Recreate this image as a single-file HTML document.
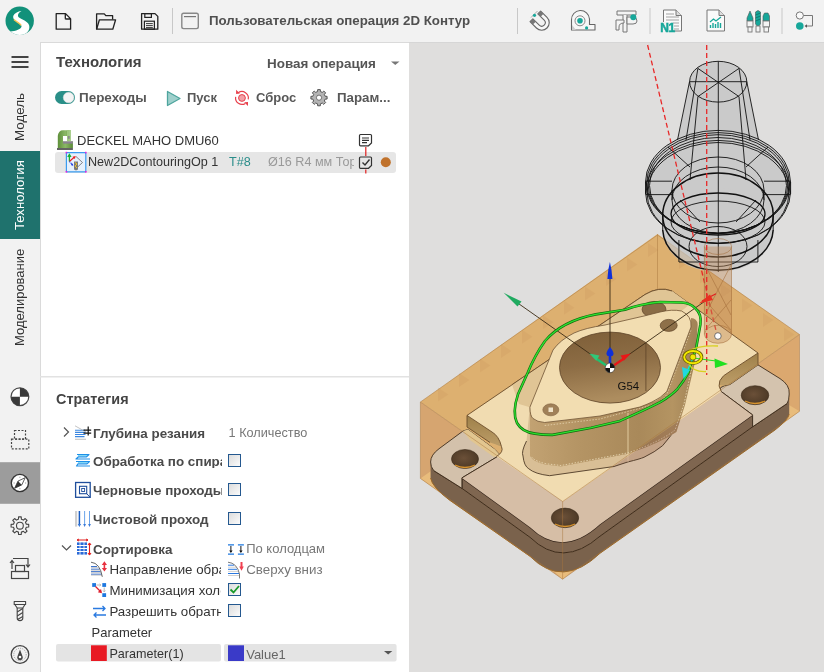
<!DOCTYPE html>
<html><head><meta charset="utf-8">
<style>
*{margin:0;padding:0;box-sizing:border-box}
html,body{width:824px;height:672px;overflow:hidden;background:#f2f2f2;font-family:"Liberation Sans",sans-serif}
.abs{position:absolute}
#top{left:0;top:0;width:824px;height:42px;background:#f2f2f2}
#side{left:0;top:42px;width:40px;height:630px;background:#f2f2f2}
#panel{left:40px;top:42px;width:369px;height:630px;background:#fff;box-shadow:inset 1px 1px 0 #dadada}
#vp{left:409px;top:42px;width:415px;height:630px;background:#dfdedd;overflow:hidden;box-shadow:inset 0 1px 0 #d6d6d6}
.vt{position:absolute;font-size:13px;white-space:nowrap;transform-origin:0 0;transform:rotate(-90deg);color:#333}
.b{font-weight:bold}
.t{position:absolute;white-space:nowrap;line-height:1}
.cb{position:absolute;width:13px;height:13px;border:1px solid #24588f;background:linear-gradient(135deg,#dcdcdc,#fbfbfb)}
</style></head><body>

<!-- TOP TOOLBAR -->
<div id="top" class="abs">
  <svg class="abs" style="left:0;top:0" width="824" height="42">
    <!-- logo -->
    <defs><clipPath id="clLogo"><circle cx="19.7" cy="20.8" r="14.2"/></clipPath></defs>
    <circle cx="19.7" cy="20.8" r="14.2" fill="#12917a"/>
    <path clip-path="url(#clLogo)" d="M21.5 10.9 C16 11.5 12 15 13.5 18.5 C15 22 20.5 22.5 21.5 26 C22 29 16 31 10 31.8 L12 40 L30 40 L25.5 33.9 C29 31 30 28 29 25 C27.5 21 22 19.5 19 17.5 C17 16 18 12.5 21.5 10.9 Z" fill="#fff"/>
    <path d="M13.9 19.6 C16 21.8 19.6 22.6 21.1 25.4" fill="none" stroke="#f4c552" stroke-width="1.4"/>
    <!-- new file -->
    <path d="M56.2 13.6 H65.4 L70.6 18.9 V29.2 H56.2 Z M65.4 13.6 L65.4 18.9 H70.6" fill="none" stroke="#222" stroke-width="1.3" stroke-linejoin="round"/>
    <path d="M65.4 13.6 L70.6 18.9 H66.6 Q65.4 18.9 65.4 17.7 Z" fill="#fff" stroke="#222" stroke-width="1.1" stroke-linejoin="round"/>
    <!-- open folder -->
    <path d="M96.6 29.2 V13.8 H104.3 L105.8 15.6 H112.6 V19.6" fill="none" stroke="#222" stroke-width="1.3" stroke-linejoin="round"/>
    <path d="M96.6 29.2 L99.4 19.8 H115.6 L112.8 29.2 Z" fill="none" stroke="#222" stroke-width="1.3" stroke-linejoin="round"/>
    <!-- save -->
    <path d="M141.6 13.6 H155 L157.8 16.4 V29.2 H141.6 Z" fill="none" stroke="#222" stroke-width="1.3" stroke-linejoin="round"/>
    <rect x="144.8" y="13.6" width="6.6" height="3.8" fill="none" stroke="#222" stroke-width="1.2"/>
    <rect x="144.4" y="21.2" width="10" height="8" fill="none" stroke="#222" stroke-width="1.2"/>
    <path d="M146 23.6 H152.8 M146 25.6 H152.8 M146 27.6 H152.8" stroke="#222" stroke-width="0.9"/>
    <!-- separator -->
    <path d="M172.5 8 V34" stroke="#c8c8c8" stroke-width="1"/>
    <!-- window icon -->
    <rect x="181.8" y="13.3" width="16.5" height="15.3" rx="1.8" fill="none" stroke="#888" stroke-width="1.4"/>
    <path d="M184 16.6 H196" stroke="#777" stroke-width="1.2"/>
    <!-- separators right -->
    <path d="M517.5 8 V34 M650 8 V34 M782 8 V34" stroke="#c8c8c8" stroke-width="1"/>
    <!-- magnet -->
    <g transform="translate(541,22) rotate(-45)">
      <path d="M-7.5 -8 V1 A7.5 7.5 0 0 0 7.5 1 V-8 H3.5 V1 A3.5 3.5 0 0 1 -3.5 1 V-8 Z" fill="#f7f7f7" stroke="#666" stroke-width="1.1" stroke-linejoin="round"/>
      <rect x="-7.5" y="-8" width="4" height="4" fill="#777"/>
      <rect x="3.5" y="-8" width="4" height="4" fill="#777"/>
    </g>
    <path d="M531 17.5 L537.5 11" stroke="#999" stroke-width="0.8"/>
    <circle cx="534.5" cy="15.3" r="1.6" fill="#17a79a"/>
    <!-- tape -->
    <path d="M571.5 30 V20 A9 9 0 0 1 589.5 19 V24.5 H595 V30 Z" fill="#f7f7f7" stroke="#666" stroke-width="1.1" stroke-linejoin="round"/>
    <circle cx="580" cy="20.8" r="5" fill="none" stroke="#888" stroke-width="1"/>
    <circle cx="580" cy="20.8" r="2.8" fill="#17a79a"/>
    <path d="M572 30 V25 L576 30 Z" fill="#ccc"/>
    <circle cx="586.6" cy="27.9" r="1.6" fill="#17a79a"/>
    <!-- caliper -->
    <g fill="#f4f4f4" stroke="#777" stroke-width="1" stroke-linejoin="round">
      <path d="M617 11 H636 V15 H617 Z"/>
      <path d="M623 15 V32 H627 V15"/>
      <path d="M616 20 H624 V23 Q619 23 619 27 V30 H616 Z"/>
      <path d="M627 17 H633 Q637 17 637 21 Q637 24 633 24 H627 Z"/>
    </g>
    <circle cx="633.3" cy="17.3" r="3" fill="#17a79a"/>
    <!-- N1 doc -->
    <path d="M663.5 10 H676 L681.5 15.5 V31 H663.5 Z" fill="#fafafa" stroke="#777" stroke-width="1"/>
    <path d="M676 10 V15.5 H681.5" fill="#ddd" stroke="#777" stroke-width="1"/>
    <path d="M666 14 H674 M666 17 H679 M666 20 H679 M666 23 H679 M674 26 H679 M674 29 H679" stroke="#999" stroke-width="0.9"/>
    <rect x="660" y="22" width="13" height="10" fill="#f2f2f2"/><text x="660.3" y="32" font-family="Liberation Sans" font-weight="bold" font-size="12" fill="#17a79a" stroke="#17a79a" stroke-width="0.5" letter-spacing="-0.5">N1</text>
    <!-- chart doc -->
    <path d="M707 10 H719 L724.5 15.5 V31 H707 Z" fill="#fafafa" stroke="#777" stroke-width="1"/>
    <path d="M719 10 V15.5 H724.5" fill="#ddd" stroke="#777" stroke-width="1"/>
    <path d="M710 22 L713.5 19 L716 21 L721 17" fill="none" stroke="#17a79a" stroke-width="1.2"/>
    <path d="M710.5 28 V25 M713 28 V23 M715.5 28 V24 M718 28 V22 M720.5 28 V23" stroke="#17a79a" stroke-width="1.4"/>
    <!-- tools -->
    <g>
      <path d="M747 18 L750 11 L753 18 V21 H747 Z" fill="#17a79a" stroke="#555" stroke-width="0.6"/>
      <rect x="747" y="21" width="6" height="6" fill="#f4f4f4" stroke="#777" stroke-width="0.9"/>
      <rect x="748" y="27" width="4" height="5" fill="#f4f4f4" stroke="#777" stroke-width="0.9"/>
      <path d="M755.5 12 Q758 9 760.5 12 V24 L758 27 L755.5 24 Z" fill="#17a79a" stroke="#555" stroke-width="0.6"/>
      <path d="M755.5 15 L760.5 13 M755.5 18 L760.5 16 M755.5 21 L760.5 19" stroke="#0c6e66" stroke-width="0.8"/>
      <rect x="756" y="26" width="4" height="6" fill="#f4f4f4" stroke="#777" stroke-width="0.9"/>
      <path d="M763 16 L764.5 13 H768 L769.5 16 V21 H763 Z" fill="#17a79a" stroke="#555" stroke-width="0.6"/>
      <rect x="763" y="21" width="6.5" height="6" fill="#f4f4f4" stroke="#777" stroke-width="0.9"/>
      <rect x="764" y="27" width="4.5" height="5" fill="#f4f4f4" stroke="#777" stroke-width="0.9"/>
    </g>
    <!-- flow -->
    <circle cx="799.8" cy="15.5" r="3.6" fill="#fafafa" stroke="#777" stroke-width="1"/>
    <circle cx="799.8" cy="26" r="3.8" fill="#17a79a"/>
    <path d="M803.5 15.5 H812.5 V26 H806" fill="none" stroke="#777" stroke-width="1"/>
    <path d="M804.5 26 L807 24.3 V27.7 Z" fill="#555"/>
  </svg>
  <div class="t b" style="left:209px;top:14px;font-size:13.3px;color:#505050">Пользовательская операция 2D Контур</div>
</div>

<!-- SIDEBAR -->
<div id="side" class="abs">
  <svg class="abs" style="left:0;top:0" width="40" height="630">
    <path d="M11.5 15 H28.5 M11.5 20 H28.5 M11.5 25 H28.5" stroke="#444" stroke-width="2"/>
    <rect x="0" y="109" width="40" height="88" fill="#1f726d"/>
    <rect x="0" y="420.2" width="40" height="41.6" fill="#9c9c9c"/>
    <!-- origin icon -->
    <g transform="translate(19.9,354.7)">
      <circle r="8.9" fill="#fff" stroke="#4a4a4a" stroke-width="1.2"/>
      <path d="M0 0 V-8.9 A8.9 8.9 0 0 1 8.9 0 Z M0 0 V8.9 A8.9 8.9 0 0 1 -8.9 0 Z" fill="#3a3a3a"/>
    </g>
    <!-- stock dashed -->
    <g fill="none" stroke="#444" stroke-width="1.2" stroke-dasharray="2 1.5">
      <rect x="14.5" y="388.5" width="11" height="8.7"/>
      <rect x="11.5" y="397.2" width="17.3" height="9.6"/>
    </g>
    <!-- compass -->
    <g transform="translate(19.9,441)">
      <circle r="8.6" fill="#fff" stroke="#333" stroke-width="1.4"/>
      <path d="M0 -6.3 V-5.2 M0 6.3 V5.2 M-6.3 0 H-5.2 M6.3 0 H5.2" stroke="#666" stroke-width="0.7"/>
      <path d="M5.3 -5.3 L1.9 1.9 L-5.3 5.3 L-1.9 -1.9 Z" fill="#fff" stroke="#333" stroke-width="0.8"/>
      <path d="M1.9 1.9 L-5.3 5.3 L-1.9 -1.9 Z" fill="#333"/>
    </g>
    <!-- gear -->
    <path d="M18.41 477.27 L18.58 474.90 L21.22 474.90 L21.39 477.27 L23.39 478.10 L25.19 476.54 L27.06 478.41 L25.50 480.21 L26.33 482.21 L28.70 482.38 L28.70 485.02 L26.33 485.19 L25.50 487.19 L27.06 488.99 L25.19 490.86 L23.39 489.30 L21.39 490.13 L21.22 492.50 L18.58 492.50 L18.41 490.13 L16.41 489.30 L14.61 490.86 L12.74 488.99 L14.30 487.19 L13.47 485.19 L11.10 485.02 L11.10 482.38 L13.47 482.21 L14.30 480.21 L12.74 478.41 L14.61 476.54 L16.41 478.10 Z" fill="none" stroke="#444" stroke-width="1.1" stroke-linejoin="round"/>
    <circle cx="19.9" cy="483.7" r="3.4" fill="none" stroke="#444" stroke-width="1.1"/>
    <!-- transfer -->
    <g fill="none" stroke="#444" stroke-width="1.2">
      <rect x="11.5" y="529.5" width="17" height="7"/>
      <rect x="15.5" y="523.5" width="9" height="6"/>
      <path d="M12 527 V518.5 M10 521 L12 518.5 L14 521"/>
      <path d="M13 516.5 H28 V525 M26 522.5 L28 525 L30 522.5"/>
    </g>
    <!-- drill -->
    <g fill="none" stroke="#444" stroke-width="1.1" stroke-linejoin="round">
      <path d="M14.2 559.5 H25.6 V562.5 H14.2 Z"/>
      <path d="M14.8 562.5 L17.2 566 H22.8 L25 562.5"/>
      <path d="M17.2 566 V576 Q17.2 578.6 20 578.6 Q22.8 578.6 22.8 576 V566"/>
      <path d="M17.2 570 L22.8 566.5 M17.2 574 L22.8 570.5 M17.5 577.5 L22.8 574.5"/>
    </g>
    <!-- dial -->
    <g transform="translate(20,612.5)">
      <circle r="8.8" fill="none" stroke="#444" stroke-width="1.3"/>
      <circle r="6.2" fill="none" stroke="#666" stroke-width="0.6" stroke-dasharray="1 1.2"/>
      <path d="M0 -5 L2.6 2 A2.8 2.8 0 1 1 -2.6 2 Z" fill="#444"/>
      <circle cy="2.5" r="1.3" fill="#fff"/>
    </g>
  </svg>
  <div class="vt" style="left:11.5px;top:98.5px;font-size:13.4px">Модель</div>
  <div class="vt" style="left:11.8px;top:188px;color:#fff;font-size:13.2px">Технология</div>
  <div class="vt" style="left:11.5px;top:304px">Моделирование</div>
</div>

<!-- PANEL -->
<div id="panel" class="abs">
  <div class="t b" style="left:16px;top:12px;font-size:15px;color:#444">Технология</div>
  <div class="t b" style="left:227px;top:14.5px;font-size:13.45px;color:#555">Новая операция</div>
  <svg class="abs" style="left:0;top:0" width="369" height="630">
    <path d="M351 19.5 H359.5 L355.25 23 Z" fill="#777"/>
    <!-- toggle -->
    <rect x="15" y="49" width="20" height="13" rx="6.5" fill="#2a8f88"/>
    <circle cx="28.6" cy="55.5" r="5.3" fill="#f4f4f4" stroke="#e0e0e0" stroke-width="0.5"/>
    <!-- play -->
    <path d="M127.5 49.5 L140 56.5 L127.5 63.5 Z" fill="#9fd0cc" stroke="#4ea59e" stroke-width="1.3" stroke-linejoin="round"/>
    <!-- reset -->
    <g fill="none" stroke="#e8404c" stroke-width="1.2">
      <path d="M198.29 50.72 A6.4 6.4 0 0 1 208.22 57.29"/>
      <path d="M195.66 54.85 A6.4 6.4 0 0 0 205.35 61.39"/>
    </g>
    <path d="M196.1 47.7 L196.1 51.9 L199.9 51.6 Z M208 60 L208 64 L204.2 60.3 Z" fill="#e8404c"/>
    <circle cx="201.96" cy="55.96" r="3.4" fill="#f2a0a6" stroke="#e8404c" stroke-width="1"/>
    <!-- gear -->
    <path d="M285.14 54.28 L287.09 54.35 L287.09 57.05 L285.14 57.12 L284.35 59.03 L285.67 60.47 L283.77 62.37 L282.33 61.05 L280.42 61.84 L280.35 63.79 L277.65 63.79 L277.58 61.84 L275.67 61.05 L274.23 62.37 L272.33 60.47 L273.65 59.03 L272.86 57.12 L270.91 57.05 L270.91 54.35 L272.86 54.28 L273.65 52.37 L272.33 50.93 L274.23 49.03 L275.67 50.35 L277.58 49.56 L277.65 47.61 L280.35 47.61 L280.42 49.56 L282.33 50.35 L283.77 49.03 L285.67 50.93 L284.35 52.37 Z" fill="#b4b4b4" stroke="#555" stroke-width="1" stroke-linejoin="round"/>
    <circle cx="279" cy="55.7" r="2.6" fill="#fff" stroke="#555" stroke-width="0.8"/>
    <!-- machine icon -->
    <defs><linearGradient id="gMach" x1="0" y1="0" x2="1" y2="0"><stop offset="0" stop-color="#5e8f3a"/><stop offset="0.5" stop-color="#8bb866"/><stop offset="1" stop-color="#5a8a36"/></linearGradient></defs>
    <path d="M17.8 106 V93.8 Q18.5 88.2 23 88.2 H27.1 V94 H23 V99.4 H32.9 V106 Z" fill="url(#gMach)"/>
    <rect x="27" y="88" width="3.8" height="11" fill="#8dbd6a"/>
    <path d="M28 88 V99 M29.8 88 V99" stroke="#c8e0b0" stroke-width="0.6"/>
    <rect x="27.9" y="94" width="1.8" height="2.8" fill="#888"/>
    <rect x="23" y="99.4" width="9.9" height="2.2" fill="#8a8290"/>
    <rect x="17" y="106.2" width="15.9" height="1.6" fill="#3e3e3e"/>
    <!-- selected row -->
    <rect x="15" y="110" width="341" height="21" rx="3" fill="#e6e6e6"/>
    <!-- op icon -->
    <rect x="26.4" y="110.6" width="19.4" height="19.2" rx="0.8" fill="#e6f0fc" stroke="#3a9cf0" stroke-width="1.2"/>
    <g fill="#e020e0"><rect x="25.6" y="109.8" width="1.6" height="1.6"/><rect x="45" y="109.8" width="1.6" height="1.6"/><rect x="25.6" y="129" width="1.6" height="1.6"/><rect x="45" y="129" width="1.6" height="1.6"/></g>
    <path d="M36 114.5 L42.5 120.5 L36 126.5" fill="none" stroke="#777" stroke-width="0.9"/>
    <path d="M29.4 119.5 V112.5 M27.8 115 L29.4 112.5 L31 115" fill="none" stroke="#18b030" stroke-width="1.3"/>
    <path d="M29.4 119.5 L34.5 115" stroke="#e82020" stroke-width="1.1"/>
    <path d="M35.8 114 L32.5 114.8 L34.8 117 Z" fill="#e82020"/>
    <path d="M29.4 119.5 L33.5 124" stroke="#2040e0" stroke-width="1.1" stroke-dasharray="1.2 0.8"/>
    <circle cx="32" cy="122.5" r="0.9" fill="#2040e0"/>
    <path d="M34 119.5 H38 V127.5 L36 128.5 L34 127.5 Z" fill="#7a7a7a"/>
    <path d="M35 120.5 L37 122 L35 124 L37 126" fill="none" stroke="#f0c020" stroke-width="1"/>
    <!-- note icon -->
    <g fill="none" stroke="#333" stroke-width="1.2">
      <path d="M320.5 92.5 H330.5 Q331.5 92.5 331.5 93.5 V101 L328.5 103.8 H320.5 Q319.5 103.8 319.5 102.8 V93.5 Q319.5 92.5 320.5 92.5Z"/>
      <path d="M322 96 H329 M322 98.3 H329 M322 100.6 H327"/>
      <path d="M320.5 115 H330.5 Q331.5 115 331.5 116 V123.5 L328.5 126.3 H320.5 Q319.5 126.3 319.5 125.3 V116 Q319.5 115 320.5 115Z"/>
      <path d="M322.5 120.5 L325 123 L329.5 117.5" stroke-width="1.4"/>
    </g>
    <path d="M325.8 105 V114 M325.8 127.5 V131.5" stroke="#e02020" stroke-width="1.2"/>
    <circle cx="345.8" cy="120.3" r="5" fill="#c0722c"/>
    <!-- divider -->
    <rect x="0" y="334" width="369" height="1.5" fill="#e2e2e2"/>
  </svg>
  <div class="t b" style="left:39px;top:48.5px;font-size:13.45px;color:#585858">Переходы</div>
  <div class="t b" style="left:147px;top:48.5px;font-size:13px;color:#585858">Пуск</div>
  <div class="t b" style="left:216px;top:48.5px;font-size:13px;color:#585858">Сброс</div>
  <div class="t b" style="left:297px;top:48.5px;font-size:13.3px;color:#585858">Парам...</div>
  <div class="t" style="left:37px;top:92px;font-size:13px;color:#333">DECKEL MAHO DMU60</div>
  <div class="t" style="left:48px;top:114px;font-size:12.6px;color:#333">New2DContouringOp 1</div>
  <div class="t" style="left:189px;top:114px;font-size:12.6px;color:#2b8d8a">T#8</div>
  <div class="t" style="left:228px;top:114px;font-size:12.6px;color:#999;width:86px;overflow:hidden">Ø16 R4 мм Тор</div>
  <div class="t b" style="left:16px;top:349.5px;font-size:14.4px;color:#444">Стратегия</div>
  <svg class="abs" style="left:0;top:0" width="369" height="630">
    <!-- chevrons -->
    <path d="M24 385.5 L28.5 390 L24 394.5" fill="none" stroke="#555" stroke-width="1.2"/>
    <path d="M22 503.5 L26.5 508 L31 503.5" fill="none" stroke="#555" stroke-width="1.2"/>
    <!-- depth icon -->
    <g>
      <path d="M35 388.3 H45 M35 390.4 H45.5 M35 392.5 H45.5 M35 394.6 H44.5" stroke="#3a86e0" stroke-width="1.1"/>
      <path d="M35 383.8 L46 390" stroke="#aaa" stroke-width="0.7"/>
      <path d="M35 397.3 H46" stroke="#c8c8c8" stroke-width="1.2"/>
      <path d="M48.2 384.5 V393.6 M43.5 388.2 H51.2 M43.5 391.1 H51.2" stroke="#111" stroke-width="1.2"/>
    </g>
    <!-- spiral icon -->
    <g fill="none" stroke-width="1.2" stroke-linejoin="round">
      <path d="M37 412.5 H49 L46.5 414.8 H38.5 L36 417 H50 M36 419.5 H49.5 L47 421.8 H38 L36.5 424 H50" stroke="#1e90e8"/>
      <path d="M38 413.6 H47 M38 420.6 H47" stroke="#50c8f0" stroke-width="0.8"/>
    </g>
    <!-- rough passes icon -->
    <g fill="none" stroke="#1f4e9c">
      <rect x="35.6" y="440.5" width="14.6" height="14.8" stroke-width="1.3"/>
      <rect x="39.5" y="444.3" width="7.2" height="7.4" stroke-width="1.1"/>
      <rect x="41.7" y="446.5" width="2.9" height="3" stroke-width="0.9"/>
      <path d="M46.7 451.7 L50.2 455.3" stroke-width="1"/>
    </g>
    <!-- finish icon -->
    <g>
      <rect x="35" y="469" width="2.2" height="15.6" fill="#d0d0d0"/>
      <path d="M39.4 469 V483" stroke="#1a5cc0" stroke-width="1.5"/>
      <path d="M44.6 469 V483 M49.5 469 V483" stroke="#5a9ae8" stroke-width="0.9"/>
      <path d="M37.7 482 L39.4 485 L41.1 482 Z M43.2 482 L44.6 485 L46 482 Z M48.1 482 L49.5 485 L50.9 482 Z" fill="#3a7ad8"/>
    </g>
    <!-- sort icon -->
    <g transform="translate(36,497)">
      <path d="M1 5 H11 M1 8 H11 M1 11 H11 M1 14 H11" stroke="#2a6ad8" stroke-width="1.8"/>
      <path d="M1 3.5 H11 M1 15.5 H11" stroke="#2a6ad8" stroke-width="0.6"/>
      <path d="M4 3 V16 M8 3 V16" stroke="#fff" stroke-width="0.8"/>
      <path d="M1 1 H12 M1 1 L3 0 M1 1 L3 2 M12 1 L10 0 M12 1 L10 2" stroke="#e02020" stroke-width="1"/>
      <path d="M13.5 4 V16 M13.5 4 L12 6 M13.5 4 L15 6 M13.5 16 L12 14 M13.5 16 L15 14" stroke="#e02020" stroke-width="1.1"/>
    </g>
    <!-- direction icon -->
    <g>
      <path d="M51 524.6 H57 M51 527.2 H59.5 M51 529.7 H60.5 M51 532.2 H61.5" stroke="#2a66c8" stroke-width="1"/>
      <path d="M51 525.6 H58 M51 528.2 H60 M51 530.7 H61 M51 533.2 H62" stroke="#c8c8c8" stroke-width="0.9"/>
      <path d="M51 520.2 Q60 521 62.3 534.8" fill="none" stroke="#555" stroke-width="0.9"/>
      <path d="M64.4 522 V527" stroke="#e83040" stroke-width="1.6"/>
      <path d="M64.4 519.3 L61.8 523 H67 Z M64.4 529.6 L61.8 526 H67 Z" fill="#e83040"/>
    </g>
    <!-- minimize icon -->
    <g>
      <rect x="52.2" y="541.1" width="3.8" height="3.8" fill="#1e78e0"/>
      <rect x="62.3" y="541.1" width="3.8" height="3.8" fill="#1e78e0"/>
      <rect x="62.3" y="551.2" width="3.8" height="3.8" fill="#1e78e0"/>
      <path d="M56.5 543 H60.5 M64.2 545.5 V549.5" stroke="#aaa" stroke-width="0.8"/>
      <path d="M59.5 541.8 L61 543 L59.5 544.2 M63 548.5 L64.2 550 L65.4 548.5" fill="none" stroke="#aaa" stroke-width="0.7"/>
      <path d="M55.5 544.5 L61 550" stroke="#e02030" stroke-width="1.2"/>
      <path d="M62 551.2 L57.8 550.2 L61 547 Z" fill="#e02030"/>
    </g>
    <!-- reverse icon -->
    <g transform="translate(52,563)" stroke="#2a7ae0" stroke-width="1.3" fill="none">
      <path d="M1 3.5 H13 M10.5 1 L13 3.5 L10.5 6"/>
      <path d="M14 10 H2 M4.5 7.5 L2 10 L4.5 12.5"/>
    </g>
    <!-- right column icons: По колодцам -->
    <g>
      <path d="M188 502.8 H194 M188 512.2 H194 M197.9 502.8 H203.9 M197.9 512.2 H203.9" stroke="#1e78e0" stroke-width="1.3"/>
      <path d="M190.9 504 V509.5 M200.9 504 V509.5" stroke="#111" stroke-width="1"/>
      <path d="M189.2 508.5 L190.9 511 L192.6 508.5 Z M199.2 508.5 L200.9 511 L202.6 508.5 Z" fill="#111"/>
    </g>
    <!-- Сверху вниз icon -->
    <g>
      <path d="M188 523.2 H194 M188 527.3 H197 M188 531.5 H199" stroke="#2a78e0" stroke-width="1"/>
      <path d="M188 525.2 H196 M188 529.4 H198 M188 533.5 H199" stroke="#ccc" stroke-width="0.9"/>
      <path d="M188 520.2 Q197 521 199.5 532 V536.5" fill="none" stroke="#555" stroke-width="0.8"/>
      <path d="M201.5 520 V525" stroke="#f04050" stroke-width="2"/>
      <path d="M199.2 524.5 L201.5 528.7 L203.8 524.5 Z" fill="#f04050"/>
    </g>
    <!-- param row highlight -->
    <rect x="16" y="602" width="165" height="17.5" rx="2" fill="#e4e4e4"/>
    <rect x="184" y="602" width="172.6" height="17.5" rx="2" fill="#e4e4e4"/>
    <rect x="51" y="603.3" width="15.8" height="15.7" fill="#e81a24"/>
    <rect x="188" y="603.3" width="16" height="15.7" fill="#3a3ac8"/>
    <path d="M344 609 H352.3 L348.15 612.6 Z" fill="#555"/>
    <!-- checkmark -->
  </svg>
  <div class="t b" style="left:53px;top:385px;font-size:13.4px;color:#4a4a4a">Глубина резания</div>
  <div class="t" style="left:188.6px;top:385px;font-size:12.7px;color:#777">1 Количество</div>
  <div class="t b" style="left:53px;top:413px;font-size:13.4px;color:#4a4a4a;width:129px;overflow:hidden">Обработка по спиралі</div>
  <div class="t b" style="left:53px;top:442px;font-size:13.4px;color:#4a4a4a;width:129px;overflow:hidden">Черновые проходы</div>
  <div class="t b" style="left:53px;top:471px;font-size:13.4px;color:#4a4a4a">Чистовой проход</div>
  <div class="cb" style="left:188px;top:412px"></div>
  <div class="cb" style="left:188px;top:441px"></div>
  <div class="cb" style="left:188px;top:470px"></div>
  <div class="t b" style="left:53px;top:501px;font-size:13.4px;color:#4a4a4a">Сортировка</div>
  <div class="t" style="left:69.4px;top:521px;font-size:13.3px;color:#333;width:112px;overflow:hidden">Направление обработки</div>
  <div class="t" style="left:69.4px;top:542px;font-size:13.3px;color:#333;width:112px;overflow:hidden">Минимизация холостых</div>
  <div class="t" style="left:69.4px;top:563px;font-size:13.3px;color:#333;width:112px;overflow:hidden">Разрешить обратное</div>
  <div class="t" style="left:51.5px;top:584px;font-size:13px;color:#333">Parameter</div>
  <div class="t" style="left:69.4px;top:606px;font-size:12.6px;color:#333">Parameter(1)</div>
  <div class="t" style="left:206.2px;top:500px;font-size:13px;color:#777">По колодцам</div>
  <div class="t" style="left:206.2px;top:521px;font-size:13.35px;color:#777">Сверху вниз</div>
  <div class="cb" style="left:188px;top:541px"><svg width="11" height="11" style="position:absolute;left:0;top:0"><path d="M1.5 5.5 L4.5 8.5 L10 2" fill="none" stroke="#1a9a2a" stroke-width="1.8"/></svg></div>
  <div class="cb" style="left:188px;top:562px"></div>
  <div class="t" style="left:206.2px;top:606px;font-size:13px;color:#666">Value1</div>
</div>

<!-- VIEWPORT -->
<div id="vp" class="abs">
<svg class="abs" style="left:0;top:0" width="415" height="630" viewBox="409 42 415 630">
  <defs>
    <linearGradient id="gWall" x1="0" y1="0" x2="1" y2="0">
      <stop offset="0" stop-color="#c2a272"/><stop offset="0.3" stop-color="#b49464"/><stop offset="0.65" stop-color="#a9895a"/><stop offset="0.85" stop-color="#b49462"/><stop offset="1" stop-color="#a08256"/>
    </linearGradient>
    <linearGradient id="gBore" x1="0" y1="0" x2="0.2" y2="1">
      <stop offset="0" stop-color="#7d5e38"/><stop offset="0.5" stop-color="#8d6d45"/><stop offset="1" stop-color="#ad8d5f"/>
    </linearGradient>
    <radialGradient id="gHole" cx="0.45" cy="0.45" r="0.6">
      <stop offset="0" stop-color="#6b5038"/><stop offset="1" stop-color="#4b3825"/>
    </radialGradient>
    <linearGradient id="gPlatSide" x1="0" y1="0" x2="0" y2="1">
      <stop offset="0" stop-color="#9e8049"/><stop offset="1" stop-color="#bd9d68"/>
    </linearGradient>
    <clipPath id="clBoss"><path d="M526.5 441 Q521 452 523 456 Q524 466 528.8 468.8 Q535 474 549.6 475.7 L614 466.5 L628 461.9 Q640 459 644 457.25 Q655 452 662.6 445.7 Q672 436 676.4 425 L681 408.8 L690 340 L530 405 Z"/><path d="M529.9 407.2 L530 456 Q533 462 545 464.5 L561 466.5 L628 453.8 Q660 443 676.4 431.9 L685 405 L695 362 L697.7 324.5 Q697 318 691 318 L691 327 L666.9 391.4 Q660 400 652 402 L600 416 L544.7 422.5 Q535 421 533 418.5 Z"/></clipPath>
  </defs>

  
  <!-- STOCK base faces -->
  <polygon points="420.4,402 657.5,234 799.5,334.5 562.6,501.5" fill="#ddb070"/>
  <polygon points="420.4,402 562.6,501.5 562.6,579.2 420.4,478.4" fill="#d6a570"/>
  <polygon points="562.6,501.5 799.5,334.5 799.5,411.3 562.6,579.2" fill="#dba86f"/>
  <!-- stock bottom seen (light) -->
  <path d="M420.4 478.4 L431 471 L449 500 L562.6 579.2 Z" fill="#e8bc7c"/>
  <path d="M562.6 579.2 L548 566 L578 566 Z" fill="#e8bc7c"/>
  <path d="M799.5 411.3 L789 405 L781 425 Z" fill="#e8bc7c"/>

  <!-- faint triangles on stock top band -->
  <g fill="#c8945a" opacity="0.22"><path d="M438.0 387.5 L448.5 394.5 L438.0 401.5 Z"/><path d="M459.0 373.1 L469.5 380.1 L459.0 387.1 Z"/><path d="M480.0 358.6 L490.5 365.6 L480.0 372.6 Z"/><path d="M501.0 344.1 L511.5 351.1 L501.0 358.1 Z"/><path d="M522.0 329.7 L532.5 336.7 L522.0 343.7 Z"/><path d="M543.0 315.2 L553.5 322.2 L543.0 329.2 Z"/><path d="M564.0 300.8 L574.5 307.8 L564.0 314.8 Z"/><path d="M585.0 286.4 L595.5 293.4 L585.0 300.4 Z"/><path d="M606.0 271.9 L616.5 278.9 L606.0 285.9 Z"/><path d="M627.0 257.5 L637.5 264.5 L627.0 271.5 Z"/><path d="M648.0 243.0 L658.5 250.0 L648.0 257.0 Z"/><path d="M679.0 255.0 L689.5 262.0 L679.0 269.0 Z"/><path d="M700.0 269.5 L710.5 276.5 L700.0 283.5 Z"/><path d="M721.0 284.0 L731.5 291.0 L721.0 298.0 Z"/><path d="M742.0 298.5 L752.5 305.5 L742.0 312.5 Z"/><path d="M763.0 313.0 L773.5 320.0 L763.0 327.0 Z"/><path d="M784.0 327.5 L794.5 334.5 L784.0 341.5 Z"/></g>

  <!-- BASE PLATE side -->
  <path d="M430.6 462 L433.75 470.6 L461.9 488.3 L530 537.3 Q562.5 569 600 536.2 L752.6 426.8 L787 403.6 Q790 400 789.2 394 L789.2 414.3 Q788 420 775 430 L600 553.3 Q562.5 589 530 556.3 L449.4 500 Q432 487 430.6 478 Z" fill="#7a624c"/>
  <path d="M600 553.3 Q562.5 589 530 556.3 L449.4 500 Q432 487 430.6 478 M789.2 414.3 Q788 420 775 430 L600 553.3" fill="none" stroke="#9c6a2a" stroke-width="1"/>
  <!-- STRIP side -->
  <path d="M461.9 477.9 L530 527.3 Q562.5 558.5 600 524.3 L752.6 414.9 L752.6 426.8 L600 536.2 Q562.5 569 530 537.3 L461.9 488.3 Z" fill="#7f6650"/>
  <path d="M433.75 470.6 L461.9 488.3 L530 537.3 Q562.5 569 600 536.2 L752.6 426.8 L787 403.6" fill="none" stroke="#3d2c1c" stroke-width="1"/>
  <path d="M461.9 477.9 L530 527.3 Q562.5 558.5 600 524.3 L752.6 414.9 V426.8 M461.9 477.9 V488.3" fill="none" stroke="#33241a" stroke-width="1.2"/>

  <!-- left tab top -->
  <path d="M463 431 L439 448.75 Q430.6 455 430.6 462 Q430.6 467 433.75 470.6 L461.9 488.3 L461.9 477.9 L500 455 L494.7 449.3 L468 429.6 Z" fill="#d3c1ab" stroke="#3d2c1c" stroke-width="0.9"/>
  <path d="M463 431 L468 429.6 L494.7 449.3 L500 455 L494 457 L470 440 Z" fill="#e2c690"/>
  <!-- right tab top -->
  <path d="M758 364.9 L780 378.6 Q790 385 789.2 394 Q789 401 787 403.6 L752.6 426.8 L752.6 414.9 L721.3 391.6 Q716 387 730 384.5 Z" fill="#d4c3ae" stroke="#3d2c1c" stroke-width="0.9"/>
  <!-- STRIP top -->
  <path d="M461.9 477.9 L500 455 L563 501.5 L721.3 391.6 L752.6 414.9 L600 524.3 Q562.5 558.5 530 527.3 Z" fill="#d6bea6"/>
  <path d="M461.9 477.9 L500 455 M721.3 391.6 L752.6 414.9" fill="none" stroke="#3d2c1c" stroke-width="0.9"/>

  <!-- PLATFORM side faces -->
  <path d="M467 415.4 L467 427 L490 442.5 Q503 447 501.5 446.7 Q503 440 492 432 Z" fill="url(#gPlatSide)"/>
  <path d="M758 353 L758 364.9 L730 384.5 Q716 388 718 380 L730 371.4 Z" fill="url(#gPlatSide)"/>
  <!-- PLATFORM top -->
  <path d="M467 415.4 L645 294.5 Q659 286 672 291 L758 353 L730 371.4 Q714 380 721.3 391.6 L563 501.5 L496.5 456.4 Q504 452 501.5 446.7 Q499 436 492 432 Z" fill="#f1dcb1"/>
  <path d="M467 415.4 L645 294.5 Q659 286 672 291 L758 353 V364.9 M758 353 L730 371.4 Q714 380 721.3 391.6 M496.5 456.4 Q504 452 501.5 446.7 Q499 436 492 432 L467 415.4 V427 L490 442.5" fill="none" stroke="#6a4c2a" stroke-width="0.9"/>

  <!-- plate holes -->
  <ellipse cx="465" cy="459" rx="13.5" ry="9.5" fill="url(#gHole)" stroke="#3a2a1a" stroke-width="0.6"/>
  <path d="M455 465 Q465 470 475 465" fill="none" stroke="#d8942e" stroke-width="1.3"/>
  <ellipse cx="565" cy="517.9" rx="13.7" ry="9.8" fill="url(#gHole)" stroke="#3a2a1a" stroke-width="0.6"/>
  <path d="M555 524 Q565 529 575 524" fill="none" stroke="#d8942e" stroke-width="1.3"/>
  <ellipse cx="755" cy="395.2" rx="13.8" ry="9.5" fill="url(#gHole)" stroke="#3a2a1a" stroke-width="0.6"/>
  <path d="M745 401 Q755 406 765 401" fill="none" stroke="#d8942e" stroke-width="1.3"/>
  <ellipse cx="654" cy="309.4" rx="12" ry="8" fill="#8a6c46" stroke="#5a4028" stroke-width="0.6"/>

  <!-- BOSS fillet -->
  <path d="M526.5 441 Q521 452 523 456 Q524 466 528.8 468.8 Q535 474 549.6 475.7 L614 466.5 L628 461.9 Q640 459 644 457.25 Q655 452 662.6 445.7 Q672 436 676.4 425 L681 408.8 L690 340 L530 405 Z" fill="#d9bf96"/>
  <path d="M526.5 441 Q521 452 523 456 Q524 466 528.8 468.8 Q535 474 549.6 475.7 L614 466.5 L628 461.9 Q640 459 644 457.25 Q655 452 662.6 445.7 Q672 436 676.4 425 L681 408.8" fill="none" stroke="#4e3a26" stroke-width="0.9"/>
  <!-- upper-left slope band -->
  <path d="M529.9 407.2 L519 404 L512 384.7 L645 294.5 Q659 286 672 291 L690 304 L681.6 311 L644 316 L605 325 Q585 328 574 333 Q560 340 553 350 Z" fill="#e0c595"/>
  <path d="M512 384.7 L645 294.5 Q659 286 672 291" fill="none" stroke="#6a4c2a" stroke-width="0.9"/>
  <ellipse cx="654" cy="309.4" rx="12" ry="8" fill="#8a6c46" stroke="#5a4028" stroke-width="0.6"/>
  <!-- BOSS wall -->
  <path d="M529.9 407.2 L530 456 Q533 462 545 464.5 L561 466.5 L628 453.8 Q660 443 676.4 431.9 L685 405 L695 362 L697.7 324.5 Q697 318 691 318 L691 327 L666.9 391.4 Q660 400 652 402 L600 416 L544.7 422.5 Q535 421 533 418.5 Z" fill="url(#gWall)"/>
  <path d="M531.5 457 Q536 462 548 464 L561 465.5 L628 452.8 Q660 442 675 430 L684 404 L693 362" fill="none" stroke="#f4e6c6" stroke-width="0.7" stroke-dasharray="1.5 1.5"/>
  <path d="M544.7 422.5 L600 416 L652 402 Q660 400 666.9 391.4 L691 327" fill="none" stroke="#f4e6c6" stroke-width="0.6" stroke-dasharray="1.5 1.5" transform="translate(0,3)"/>
  <path d="M628 413 V461.9" stroke="#f0dcb0" stroke-width="0.8"/>
  <g clip-path="url(#clBoss)" style="mix-blend-mode:multiply"><polygon points="563,501.5 721.3,391.6 760,391.6 760,520 540,520" fill="#e6d8e4"/></g>
  <!-- BOSS top -->
  <path d="M529.9 407.2 Q530 416 533 418.5 Q537 422 544.7 422.5 L600 416 L640 407 Q648 404 652 402 Q661 398 666.9 391.4 L691 327 Q692 316 681.6 311 Q672 309 660 312 L644 316 L605 325 Q585 328 574 333 Q560 340 553 350 L529.9 407.2 Z" fill="#f2ddb1" stroke="#6e5232" stroke-width="0.8"/>
  <!-- bore -->
  <ellipse cx="610" cy="367.6" rx="50.5" ry="35.5" fill="url(#gBore)" stroke="#5e4428" stroke-width="0.8"/>
  <path d="M645.9 343 V391" stroke="#5e4428" stroke-width="0.8"/>
  <!-- boss holes -->
  <ellipse cx="550.8" cy="409.8" rx="8" ry="6" fill="#a08058" stroke="#806040" stroke-width="0.6"/>
  <rect x="548.5" y="407.5" width="4.5" height="4.5" fill="#efe2c8"/>
  <ellipse cx="668.7" cy="325.4" rx="8.5" ry="6" fill="#8e7049" stroke="#5e4428" stroke-width="0.7"/>

  <!-- black axis lines -->
  <path d="M610 367.9 V276 M610 367.9 L512 299 M610 367.9 L708 299" stroke="#3a2a14" stroke-width="0.9"/>

  <!-- stock edges -->
  <path d="M657.5 234 V289" stroke="#a8773e" stroke-width="0.8" opacity="0.6"/>
  <path d="M420.4 402 L657.5 235 L799.5 334.5 V411.3 L562.6 579.2 L420.4 478.4 Z M420.4 402 L562.6 501.5 L799.5 334.5 M562.6 501.5 V579.2" fill="none" stroke="#a8773e" stroke-width="0.8" opacity="0.6"/>

  <!-- TOOL HOLDER fill -->
  <g opacity="0.74" fill="#c4c4c4">
    <path d="M689.5 81.7 A28.6 20.4 0 0 1 746.8 81.7 L760 150 L676 150 Z"/>
    <ellipse cx="718" cy="182" rx="72.5" ry="51.6"/>
    <ellipse cx="718" cy="192" rx="72.5" ry="51.6"/>
    <rect x="645.5" y="182" width="145" height="10"/>
    <ellipse cx="718" cy="215" rx="55.3" ry="42"/>
    <ellipse cx="718" cy="230" rx="55.3" ry="42"/>
    <rect x="662.7" y="215" width="110.5" height="15"/>
  </g>
  <g fill="none" stroke="#111" stroke-width="0.9">
    <ellipse cx="718.2" cy="81.7" rx="28.6" ry="20.4"/>
    <path d="M689.5 81.7 H746.8 M697.9 68.4 L739 96.6 M739 68.4 L697.9 96.6 M718.3 61.3 V272"/>
    <path d="M689.5 81.7 L677.5 140 M746.8 81.7 L758.5 140 M697.9 68.4 L686 140 M739 68.4 L750 140 M697.9 96.6 L690 180 M739 96.6 L746 180"/>
    <ellipse cx="718" cy="182" rx="72.5" ry="51.6"/>
    <ellipse cx="718" cy="183" rx="71.3" ry="50.4"/>
    <ellipse cx="718" cy="184" rx="70" ry="49.3"/>
    <ellipse cx="718" cy="185.5" rx="68.5" ry="48"/>
    <ellipse cx="718" cy="192" rx="72.5" ry="51.6"/>
    <ellipse cx="718" cy="193" rx="71" ry="50.5"/>
    <path d="M645.6 181.2 H672 M645.6 194.6 H672 M764 181.2 H790.6 M764 194.6 H790.6 M645.6 182 V194 M790.6 182 V194"/>
    <ellipse cx="718" cy="190" rx="46" ry="33"/>
    <ellipse cx="718" cy="200" rx="46" ry="33"/>
    <path d="M672 190 V200 M764 190 V200"/>
    <path d="M662.7 215 V230 M773.2 215 V230"/>
    <ellipse cx="718" cy="246.5" rx="29" ry="20"/>
    <path d="M678.9 240 V262 M757.9 240 V262 M679 262 H758"/>
    <path d="M668 147 L690 167 M768 147 L746 167 M680 200 L700 222 M756 200 L736 222"/>
  </g>
  <g fill="none" stroke="#111" stroke-width="1.5">
    <ellipse cx="718" cy="215" rx="55.3" ry="42"/>
    <path d="M662.7 230 A55.3 42 0 0 0 773.2 230"/>
    <ellipse cx="718" cy="214" rx="47" ry="21" stroke-width="1.3"/><ellipse cx="718" cy="222" rx="47" ry="21" stroke-width="0.9"/>
  </g>

  <!-- red dashed diagonal -->
  <path d="M647.6 45 L718 339" stroke="#e82828" stroke-width="1.3" stroke-dasharray="5 3" fill="none"/>
  <!-- tool shank -->
  <path d="M704.4 246.5 V334.3 A13.5 9 0 0 0 731.5 334.3 V246.5 Z" fill="#c08a58" opacity="0.42"/>
  <g fill="none" stroke="#a06a38" stroke-width="0.7" opacity="0.75">
    <ellipse cx="718" cy="246.5" rx="13.6" ry="8"/>
    <ellipse cx="718" cy="334.3" rx="13.5" ry="9"/>
    <path d="M704.4 246.5 V334.3 M731.5 246.5 V334.3 M705 265 L731 315 M731 265 L705 315 M705 300 L731 330 M731 300 L705 330"/>
  </g>
  <circle cx="717.9" cy="336" r="3.3" fill="#fff" stroke="#555" stroke-width="0.8"/>

  <!-- red dashed vertical -->
  <path d="M706.7 45 V375" stroke="#e82828" stroke-width="1.3" stroke-dasharray="5 3" fill="none"/>
  <!-- red arrow near tool -->
  <path d="M702 301 L716 293.8" stroke="#e02020" stroke-width="1.2"/>
  <path d="M699 303.5 L710 294.5 L713 300 Z" fill="#e83020"/>

  <!-- GREEN TOOLPATH -->
  <path d="M625 309.7 L595.7 314.4 Q562 321 545 341 Q535 355 527.7 372.7 L518 394.3 Q512 412 517 423 Q522 432 535 433.6 Q543 435 552.5 434.9 L591.3 427.7 L620 420.9 Q645 410 660.2 402.2 Q672 395 677.6 388.8 Q684 381 688.3 372.7 L696.3 347.2 L700.4 324.5 Q702 314 695 308 Q690 303 681.6 302.5 L660 302 Q640 304 625 309.7 Z" fill="none" stroke="#0e6e0e" stroke-width="2.6"/>
  <path d="M625 309.7 L595.7 314.4 Q562 321 545 341 Q535 355 527.7 372.7 L518 394.3 Q512 412 517 423 Q522 432 535 433.6 Q543 435 552.5 434.9 L591.3 427.7 L620 420.9 Q645 410 660.2 402.2 Q672 395 677.6 388.8 Q684 381 688.3 372.7 L696.3 347.2 L700.4 324.5 Q702 314 695 308 Q690 303 681.6 302.5 L660 302 Q640 304 625 309.7 Z" fill="none" stroke="#30e030" stroke-width="1.3"/>

  <!-- axes arrows -->
  <path d="M609.9 262 Q607.8 270 607.4 279 H612.4 Q612 270 609.9 262 Z" fill="#1030d8"/>
  <path d="M503.7 292.8 L521.5 301.5 L517.5 306.5 Z" fill="#20aa60"/>
  <path d="M610 367.9 V355" stroke="#1030d8" stroke-width="2.6"/>
  <path d="M610 347 Q606.5 351 606.4 354 L607.5 356 H612.5 L613.6 354 Q613.5 351 610 347 Z" fill="#1030d8"/>
  <path d="M610 367.9 L596 358.6" stroke="#20c070" stroke-width="2.4"/>
  <path d="M589.2 353.4 L599.5 355.6 L596.2 360.8 Z" fill="#30c878"/>
  <path d="M610 367.9 L624 358.6" stroke="#e81818" stroke-width="2.4"/>
  <path d="M630.8 353.4 L620.5 355.6 L623.8 360.8 Z" fill="#e81818"/>
  <circle cx="610" cy="367.9" r="4.8" fill="#fff"/>
  <path d="M610 367.9 V363.1 A4.8 4.8 0 0 1 614.8 367.9 Z M610 367.9 V372.7 A4.8 4.8 0 0 1 605.2 367.9 Z" fill="#111"/>
  <circle cx="610" cy="367.9" r="4.8" fill="none" stroke="#222" stroke-width="0.6"/>
  <text x="617.6" y="389.5" font-family="Liberation Sans" font-size="11.4" fill="#111">G54</text>

  <!-- tool marker -->
  <path d="M693 358 L716 361" stroke="#20e020" stroke-width="1.2"/>
  <path d="M728 364 L714.5 358.5 L715 368 Z" fill="#20e020"/>
  <path d="M693 358 L685 376" stroke="#20e0e0" stroke-width="1.4"/>
  <path d="M683.5 379 L682 367 L690 370 Z" fill="#20d8e0"/>
  <path d="M688 351 Q700 345 718 346 M689 364 Q693 372 706 371.5" fill="none" stroke="#d8d020" stroke-width="1.3"/>
  <ellipse cx="692.9" cy="357.1" rx="8.7" ry="6.2" fill="none" stroke="#6a6000" stroke-width="3.4"/><ellipse cx="692.9" cy="357.1" rx="8.7" ry="6.2" fill="none" stroke="#f2e800" stroke-width="2"/>
  <circle cx="692.9" cy="357.1" r="3" fill="#f2e800" stroke="#6a6000" stroke-width="0.7"/>
</svg>
</div>

</body></html>
